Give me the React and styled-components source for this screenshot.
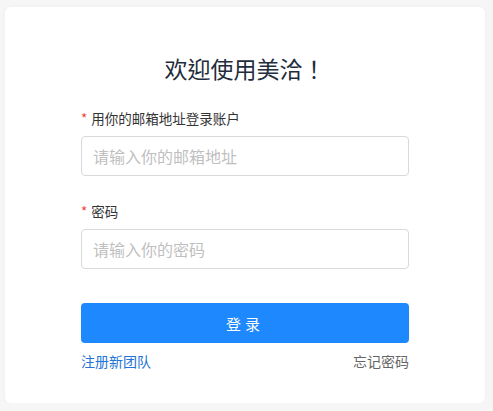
import React from "react";
import styled, { createGlobalStyle } from "styled-components";

const GlobalStyle = createGlobalStyle`
  body {
    margin: 0;
    background: #f6f6f7;
    font-family: "Noto Sans CJK SC", "Noto Sans", sans-serif;
  }
`;

const Card = styled.div`
  box-sizing: border-box;
  width: 480px;
  height: 396px;
  margin: 7px 0 0 5px;
  padding-top: 45px;
  background: #fff;
  border-radius: 6px;
  box-shadow: 0 0 4px rgba(0, 0, 0, 0.04);
  display: flex;
  flex-direction: column;
  align-items: center;
`;

const Title = styled.h1`
  margin: 0;
  font-family: "Noto Sans CJK TC", "Noto Sans CJK SC", sans-serif;
  font-size: 23px;
  line-height: 32px;
  font-weight: 400;
  color: #1f2d3d;
`;

const Form = styled.form`
  width: 328px;
  display: flex;
  flex-direction: column;
  margin-top: 24px;
`;

const Label = styled.label`
  font-size: 13.5px;
  line-height: 20px;
  color: #333;
  margin-top: ${(p) => (p.$first ? "0" : "25px")};
  margin-bottom: 8px;

  &::before {
    content: "*";
    color: #f04134;
    margin-right: 4px;
  }
`;

const Input = styled.input`
  box-sizing: border-box;
  width: 100%;
  height: 40px;
  padding: 0 11px;
  border: 1px solid #d9d9d9;
  border-radius: 4px;
  font-family: inherit;
  font-size: 16px;
  color: #333;
  outline: none;

  &::placeholder {
    color: #bfbfbf;
  }
`;

const Button = styled.button`
  margin-top: 34px;
  height: 40px;
  border: none;
  border-radius: 4px;
  background: #1e88fe;
  color: #fff;
  font-family: inherit;
  font-size: 15px;
  letter-spacing: 4px;
  cursor: pointer;
`;

const Links = styled.div`
  margin-top: 8px;
  display: flex;
  justify-content: space-between;
  font-size: 14px;
  line-height: 20px;
`;

const Link = styled.a`
  color: ${(p) => (p.$muted ? "#666" : "#2473d6")};
  text-decoration: none;
  cursor: pointer;
`;

export default function App() {
  return (
    <>
      <GlobalStyle />
      <Card>
        <Title>欢迎使用美洽！</Title>
        <Form onSubmit={(e) => e.preventDefault()}>
          <Label $first>用你的邮箱地址登录账户</Label>
          <Input placeholder="请输入你的邮箱地址" />
          <Label>密码</Label>
          <Input type="password" placeholder="请输入你的密码" />
          <Button type="submit">登录</Button>
          <Links>
            <Link>注册新团队</Link>
            <Link $muted>忘记密码</Link>
          </Links>
        </Form>
      </Card>
    </>
  );
}
